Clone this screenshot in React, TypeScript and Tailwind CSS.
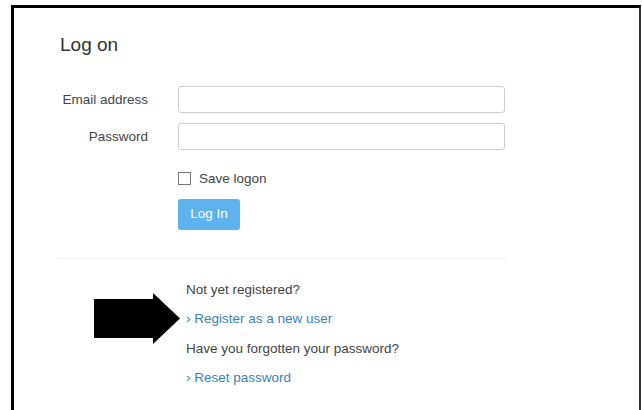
export default function App() {
  return (
    <div className="h-[410px] w-[642px] overflow-hidden bg-white pt-[5px] pl-[11px] pr-px font-['Liberation_Sans',Arial,sans-serif] text-[13.5px] text-[#444]">
      <div className="h-full border-t-[3px] border-l-[3px] border-r-2 border-t-black border-l-black border-r-[#333] pl-[46px] pt-[25px]">
        <h1 className="text-[19px] leading-[24px] text-[#333]">Log on</h1>

        <div className="mt-[29px] grid w-[445px] grid-cols-[88px_1fr] items-center gap-x-[30px] gap-y-[10px]">
          <label className="text-right leading-none">Email address</label>
          <input
            type="text"
            className="h-[27px] w-[327px] rounded-[3px] border border-[#ccc] bg-white outline-none"
          />
          <label className="text-right leading-none">Password</label>
          <input
            type="password"
            className="h-[27px] w-[327px] rounded-[3px] border border-[#ccc] bg-white outline-none"
          />
        </div>

        <div className="ml-[118px] mt-[22px] flex items-center gap-[8px]">
          <span className="h-[13px] w-[13px] border border-[#777] bg-white" />
          <span className="leading-none">Save logon</span>
        </div>

        <button className="ml-[118px] mt-[13px] h-[31px] w-[62px] rounded-[3px] bg-[#5db4ec] text-white">
          Log In
        </button>

        <div className="-ml-[2px] mt-[28px] h-px w-[450px] bg-[#f0f0f0]" />

        <div className="ml-[126px] mt-[21px] flex flex-col">
          <p className="h-[29.5px] leading-[20px]">Not yet registered?</p>
          <p className="relative h-[29.5px] leading-[20px] text-[#3b7fb8]">
            <svg
              className="absolute left-[-92px] top-[-16px]"
              width="87"
              height="51"
              viewBox="0 0 87 51"
            >
              <path d="M0 6 H59 V0 L86 25.5 L59 51 V45 H0 Z" fill="#000" />
            </svg>
            › Register as a new user
          </p>
          <p className="h-[29.5px] leading-[20px]">Have you forgotten your password?</p>
          <p className="h-[29.5px] leading-[20px] text-[#3b7fb8]">› Reset password</p>
        </div>
      </div>
    </div>
  )
}
